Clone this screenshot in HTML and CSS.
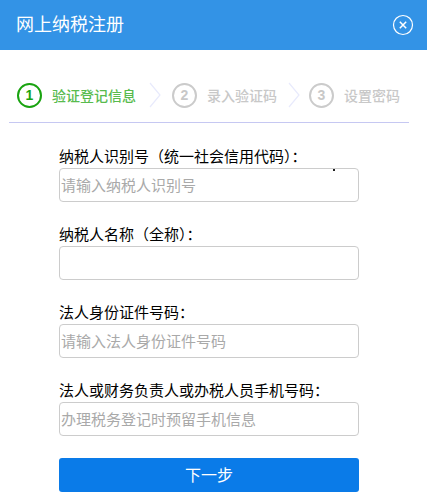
FILE: index.html
```html
<!DOCTYPE html>
<html lang="zh-CN">
<head>
  <meta charset="UTF-8">
  <meta name="viewport" content="width=device-width, initial-scale=1.0">
  <title>网上纳税注册</title>
  <link rel="stylesheet" href="styles.css">
</head>
<body>
  <div class="header">
    <h1>网上纳税注册</h1>
    <button class="close-btn" aria-label="关闭">
      <svg width="22" height="22" viewBox="0 0 22 22" fill="none" stroke="#fff">
        <circle cx="11" cy="11" r="9.5" stroke-width="1.2"/>
        <path d="M7.8 7.8l6.4 6.4M14.2 7.8l-6.4 6.4" stroke-width="1.5"/>
      </svg>
    </button>
  </div>

  <div class="steps">
    <div class="step active"><span class="num">1</span><span class="step-text">验证登记信息</span></div>
    <svg class="chevron" width="12" height="26" viewBox="0 0 12 26" fill="none" stroke="#e8eafc" stroke-width="1.2"><path d="M1 1l10 12L1 25"/></svg>
    <div class="step"><span class="num">2</span><span class="step-text">录入验证码</span></div>
    <svg class="chevron tight" width="12" height="26" viewBox="0 0 12 26" fill="none" stroke="#e8eafc" stroke-width="1.2"><path d="M1 1l10 12L1 25"/></svg>
    <div class="step"><span class="num">3</span><span class="step-text">设置密码</span></div>
  </div>

  <form class="form">
    <div class="field">
      <label>纳税人识别号（统一社会信用代码）<span class="colon">：</span></label>
      <input type="text" placeholder="请输入纳税人识别号">
      <span class="speck"></span>
    </div>
    <div class="field">
      <label>纳税人名称（全称）<span class="colon">：</span></label>
      <input type="text">
    </div>
    <div class="field">
      <label>法人身份证件号码<span class="colon">：</span></label>
      <input type="text" placeholder="请输入法人身份证件号码">
    </div>
    <div class="field">
      <label>法人或财务负责人或办税人员手机号码<span class="colon">：</span></label>
      <input type="text" placeholder="办理税务登记时预留手机信息">
    </div>
    <button type="button" class="next-btn">下一步</button>
  </form>
</body>
</html>
```

FILE: styles.css
```css
body {
  margin: 0;
  height: 493px;
  overflow: hidden;
  background-color: #fff;
  font-family: "Noto Sans CJK SC", "Liberation Sans", sans-serif;
}

.header {
  height: 50px;
  background-color: #3393e6;
  display: flex;
  align-items: center;
  justify-content: space-between;
  padding: 0 13px 0 16px;
}

.header h1 {
  margin: 0 0 4px;
  font-size: 18px;
  font-weight: 400;
  line-height: 40px;
  color: #fff;
}

.close-btn {
  background: none;
  border: none;
  padding: 0;
  width: 22px;
  height: 22px;
  cursor: pointer;
}

.close-btn svg {
  display: block;
}

.steps {
  margin: 0 18px 0 9px;
  width: 400px;
  height: 73px;
  box-sizing: border-box;
  border-bottom: 1px solid #c6c8f2;
  padding: 32px 0 0 8px;
  display: flex;
  align-items: flex-start;
}

.step {
  display: flex;
  align-items: center;
  gap: 10px;
  height: 26px;
  color: #c8c8c8;
  font-size: 14px;
  font-weight: 500;
}

.num {
  width: 25px;
  height: 25px;
  box-sizing: border-box;
  border: 2px solid #cbcbcb;
  border-radius: 50%;
  display: flex;
  align-items: center;
  justify-content: center;
  font-family: "Liberation Sans", sans-serif;
  font-size: 14px;
  font-weight: 700;
}

.step.active {
  color: #58bb4e;
}

.step.active .num {
  border-color: #19a310;
  color: #19a310;
}

.chevron {
  margin: 0 11px 0 13px;
}

.chevron.tight {
  margin: 0 9px 0 11px;
}

.form {
  padding: 0 68px 0 59px;
}

.field {
  position: relative;
  margin-top: 20px;
  height: 58px;
}

.field:first-child {
  margin-top: 21px;
}

.field label {
  display: block;
  height: 24px;
  font-size: 15px;
  line-height: 24px;
  color: #000;
  white-space: nowrap;
}

.colon {
  font-family: "Noto Sans CJK JP", sans-serif;
}

.field input {
  display: block;
  width: 300px;
  height: 34px;
  box-sizing: border-box;
  border: 1px solid #ccc;
  border-radius: 4px;
  padding: 0 1px 2px;
  font-family: inherit;
  font-size: 15px;
  background-color: #fff;
}

.field input::placeholder {
  color: #a9a9a9;
  opacity: 1;
}

.speck {
  position: absolute;
  left: 274px;
  top: 25px;
  width: 2px;
  height: 2px;
  background-color: #222;
}

.next-btn {
  display: block;
  width: 300px;
  height: 34px;
  margin-top: 22px;
  padding: 0 0 2px;
  border: none;
  border-radius: 3px;
  background-color: #0a7be8;
  color: #fff;
  font-family: inherit;
  font-size: 16px;
  cursor: pointer;
}
```
